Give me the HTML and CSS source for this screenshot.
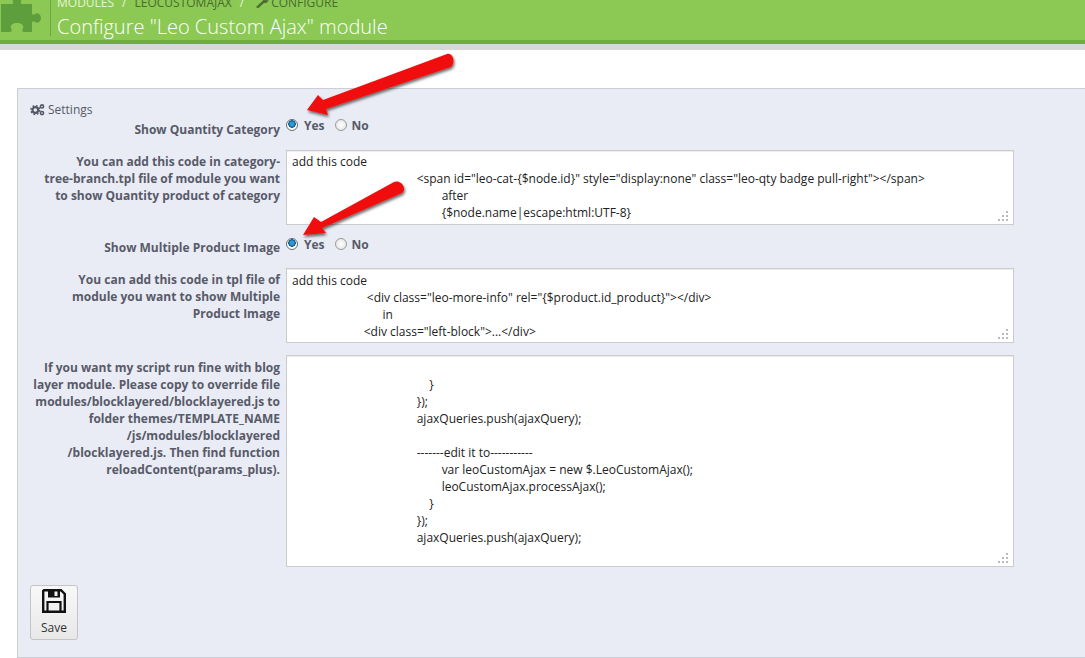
FILE: index.html
```html
<!DOCTYPE html>
<html lang="en">
<head>
<meta charset="utf-8">
<title>Configure module</title>
<link rel="stylesheet" href="styles.css">
</head>
<body>
<header class="page-head">
  <svg class="puzzle" width="44" height="36" viewBox="0 0 44 36"><path d="M1 4H12C14 4 13 1 12-1V-6H22V-1C21 1 20 4 22 4H32V13C32 15 34 15 35 14 37 12 41 14 41 18 41 22 37 24 35 22 34 21 32 21 32 23V32H24C22 32 22 30 23 28 24 26 22 23 17 23 12 23 10 26 11 28 12 30 12 32 10 32H1Z" fill="#5f9e3c"/></svg>
  <div class="head-text">
    <div class="crumbs">
      <span class="crumb-light">MODULES</span><span class="sep">/</span><span class="crumb-dark">LEOCUSTOMAJAX</span><span class="sep">/</span>
      <svg class="wrench" width="14" height="12" viewBox="0 0 14 12"><path d="M1 11 8 4.500C8 2 10 .5 13 1L10.500 3l1 1.500L13.500 3.500C13.500 6 11 7.500 9 7L3 12.500z" fill="#4d6b33"/></svg>
      <span class="crumb-dark">CONFIGURE</span>
    </div>
    <h1 class="title">Configure "Leo Custom Ajax" module</h1>
  </div>
</header>
<div class="head-shadow"></div>

<main class="panel">
  <div class="panel-title">
    <svg class="gears" width="16" height="14" viewBox="0 0 18 15"><g fill="none" stroke="#555866"><circle cx="6" cy="7.500" r="3.200" stroke-width="2.400"/><circle cx="6" cy="7.500" r="5" stroke-width="1.600" stroke-dasharray="2 1.930"/><circle cx="13.500" cy="3.500" r="1.800" stroke-width="1.800"/><circle cx="13.500" cy="11" r="1.800" stroke-width="1.800"/></g></svg>
    <span>Settings</span>
  </div>

  <div class="row row-radio row-first">
    <div class="label">Show Quantity Category</div>
    <div class="radios">
      <span class="radio on"></span><span class="radio-text">Yes</span>
      <span class="radio"></span><span class="radio-text">No</span>
    </div>
  </div>

  <div class="row">
    <div class="label label-text">You can add this code in category-<br>tree-branch.tpl file of module you want<br>to show Quantity product of category</div>
    <div class="code code-short">add this code
                                        &lt;span id="leo-cat-{$node.id}" style="display:none" class="leo-qty badge pull-right"&gt;&lt;/span&gt;
                                                after
                                                {$node.name|escape:html:UTF-8}<span class="grip"></span></div>
  </div>

  <div class="row row-radio">
    <div class="label">Show Multiple Product Image</div>
    <div class="radios radios-second">
      <span class="radio on"></span><span class="radio-text">Yes</span>
      <span class="radio"></span><span class="radio-text">No</span>
    </div>
  </div>

  <div class="row">
    <div class="label label-text">You can add this code in tpl file of<br>module you want to show Multiple<br>Product Image</div>
    <div class="code code-short code-mid">add this code
                        &lt;div class="leo-more-info" rel="{$product.id_product}"&gt;&lt;/div&gt;
                             in
                       &lt;div class="left-block"&gt;...&lt;/div&gt;<span class="grip"></span></div>
  </div>

  <div class="row row-last">
    <div class="label label-long">If you want my script run fine with blog<br>layer module. Please copy to override file<br>modules/blocklayered/blocklayered.js to<br>folder themes/TEMPLATE_NAME<br>/js/modules/blocklayered<br>/blocklayered.js. Then find function<br>reloadContent(params_plus).</div>
    <div class="code code-tall">
                                            }
                                        });
                                        ajaxQueries.push(ajaxQuery);

                                        -------edit it to-----------
                                                var leoCustomAjax = new $.LeoCustomAjax();
                                                leoCustomAjax.processAjax();
                                            }
                                        });
                                        ajaxQueries.push(ajaxQuery);<span class="grip"></span></div>
  </div>

  <button class="save" type="button">
    <svg width="24" height="24" viewBox="0 0 24 24"><path d="M2 1.200h17l3.800 3.800v17.800H1.200V2z" fill="none" stroke="#111" stroke-width="2.400"/><path d="M6 1h12v7.500H6z" fill="#111"/><path d="M12.500 2.500h3v4.500h-3z" fill="#f1f1f1"/><path d="M5.500 22.500V13h13v9.500" fill="none" stroke="#111" stroke-width="2.200"/></svg>
    <span>Save</span>
  </button>
</main>

<svg class="arrow arrow-a" width="160" height="72" viewBox="0 0 160 72"><defs><filter id="sh" x="-20%" y="-20%" width="140%" height="140%"><feDropShadow dx="1" dy="2" stdDeviation="1.500" flood-color="#000" flood-opacity=".6"/></filter></defs><path d="M145 2 21 48 16 43 5 58 26 63 24 57 149 15C154 11 151 0 145 2Z" fill="#f01010" filter="url(#sh)"/></svg>
<svg class="arrow arrow-b" width="110" height="70" viewBox="0 0 110 70"><path d="M94 6 21 46 14 41 3 59 26 57 22 52 102 17C108 12 100 3 94 6Z" fill="#f01010" filter="url(#sh)"/></svg>
</body>
</html>
```
FILE: styles.css
```css
* { box-sizing: border-box; }
html, body { margin: 0; padding: 0; }
body {
  width: 1085px;
  height: 658px;
  overflow: hidden;
  position: relative;
  background: #fff;
  font-family: "Open Sans", sans-serif;
  font-size: 12px;
  color: #585a69;
}
.page-head {
  height: 44px;
  background: #8bc954;
  border-bottom: 4px solid #6fad3e;
  display: flex;
  overflow: hidden;
}
.puzzle { flex: none; margin-right: 6px; }
.head-text {
  border-left: 1px solid #6fa548;
  height: 36px;
  padding-left: 6px;
}
.crumbs {
  height: 16px;
  margin-top: -6px;
  line-height: 17px;
  font-size: 12px;
  display: flex;
  align-items: center;
  white-space: nowrap;
}
.crumb-light { color: #e6f5d6; }
.crumb-dark { color: #4a6a2e; }
.sep { color: #e6f5d6; margin: 0 8px; }
.wrench { margin: 0 2px 0 3px; }
.title {
  margin: 3px 0 0;
  font-size: 20px;
  line-height: 27px;
  font-weight: 300;
  color: #fff;
  white-space: nowrap;
}
.head-shadow { height: 6px; background: #d8d8d8; }
.panel {
  margin: 38px 0 0 17px;
  width: 1080px;
  height: 570px;
  background: #e9ecf4;
  border: 1px solid #ccced7;
  padding: 12px 0 0 12px;
}
.panel-title {
  height: 17px;
  line-height: 17px;
  display: flex;
  align-items: center;
}
.gears { margin-right: 2px; }
.row { display: flex; gap: 6px; }
.label {
  width: 250px;
  flex: none;
  text-align: right;
  font-weight: 700;
  line-height: 17px;
}
.label-text { padding-top: 3px; }
.label-long { padding-top: 4px; }
.row-radio { height: 29px; margin-top: 14px; }
.row-first { margin-top: 3px; }
.row-last { margin-top: 12px; }
.radios {
  display: flex;
  align-items: center;
  height: 16px;
  margin-top: -4px;
  font-weight: 700;
  font-size: 12px;
}
.radios-second { margin-top: -3px; }
.radio {
  width: 12px;
  height: 12px;
  border-radius: 50%;
  border: 1px solid #9a9a9a;
  background: radial-gradient(circle, #fff, #e0e0e0);
  margin-right: 6px;
}
.radio.on {
  background: radial-gradient(circle at 50% 40%, #2a9bd6 0 2px, #0b4f80 3.500px, #fff 4px);
  border-color: #6a6a6a;
}
.radio-text { margin-right: 10px; }
.radio-text:last-child { margin-left: -1px; }
.code {
  position: relative;
  width: 728px;
  background: #fff;
  border: 1px solid #ccc;
  box-shadow: inset 0 1px 1px rgba(0,0,0,.08);
  padding: 2px 5px;
  line-height: 17px;
  color: #222;
  white-space: pre;
  overflow: hidden;
}
.code-short { height: 75px; }
.code-mid { padding-top: 3px; }
.code-tall { height: 212px; padding-top: 3px; }
.grip {
  position: absolute;
  right: 5px;
  bottom: 3px;
  width: 10px;
  height: 10px;
  background:
    linear-gradient(#bbb,#bbb) 8px 0/2px 2px no-repeat,
    linear-gradient(#bbb,#bbb) 4px 4px/2px 2px no-repeat,
    linear-gradient(#bbb,#bbb) 8px 4px/2px 2px no-repeat,
    linear-gradient(#bbb,#bbb) 0 8px/2px 2px no-repeat,
    linear-gradient(#bbb,#bbb) 4px 8px/2px 2px no-repeat,
    linear-gradient(#bbb,#bbb) 8px 8px/2px 2px no-repeat;
}
.save {
  display: flex;
  flex-direction: column;
  align-items: center;
  width: 48px;
  height: 55px;
  margin-top: 18px;
  padding: 3px 0 0;
  background: linear-gradient(#f8f8f8, #e8e8e8);
  border: 1px solid #c4c4c4;
  border-radius: 3px;
  font-family: inherit;
  font-size: 12px;
  color: #333;
  line-height: 17px;
  gap: 6px;
}
.arrow { position: absolute; }
.arrow-a { left: 302px; top: 52px; }
.arrow-b { left: 300px; top: 176px; }
```
